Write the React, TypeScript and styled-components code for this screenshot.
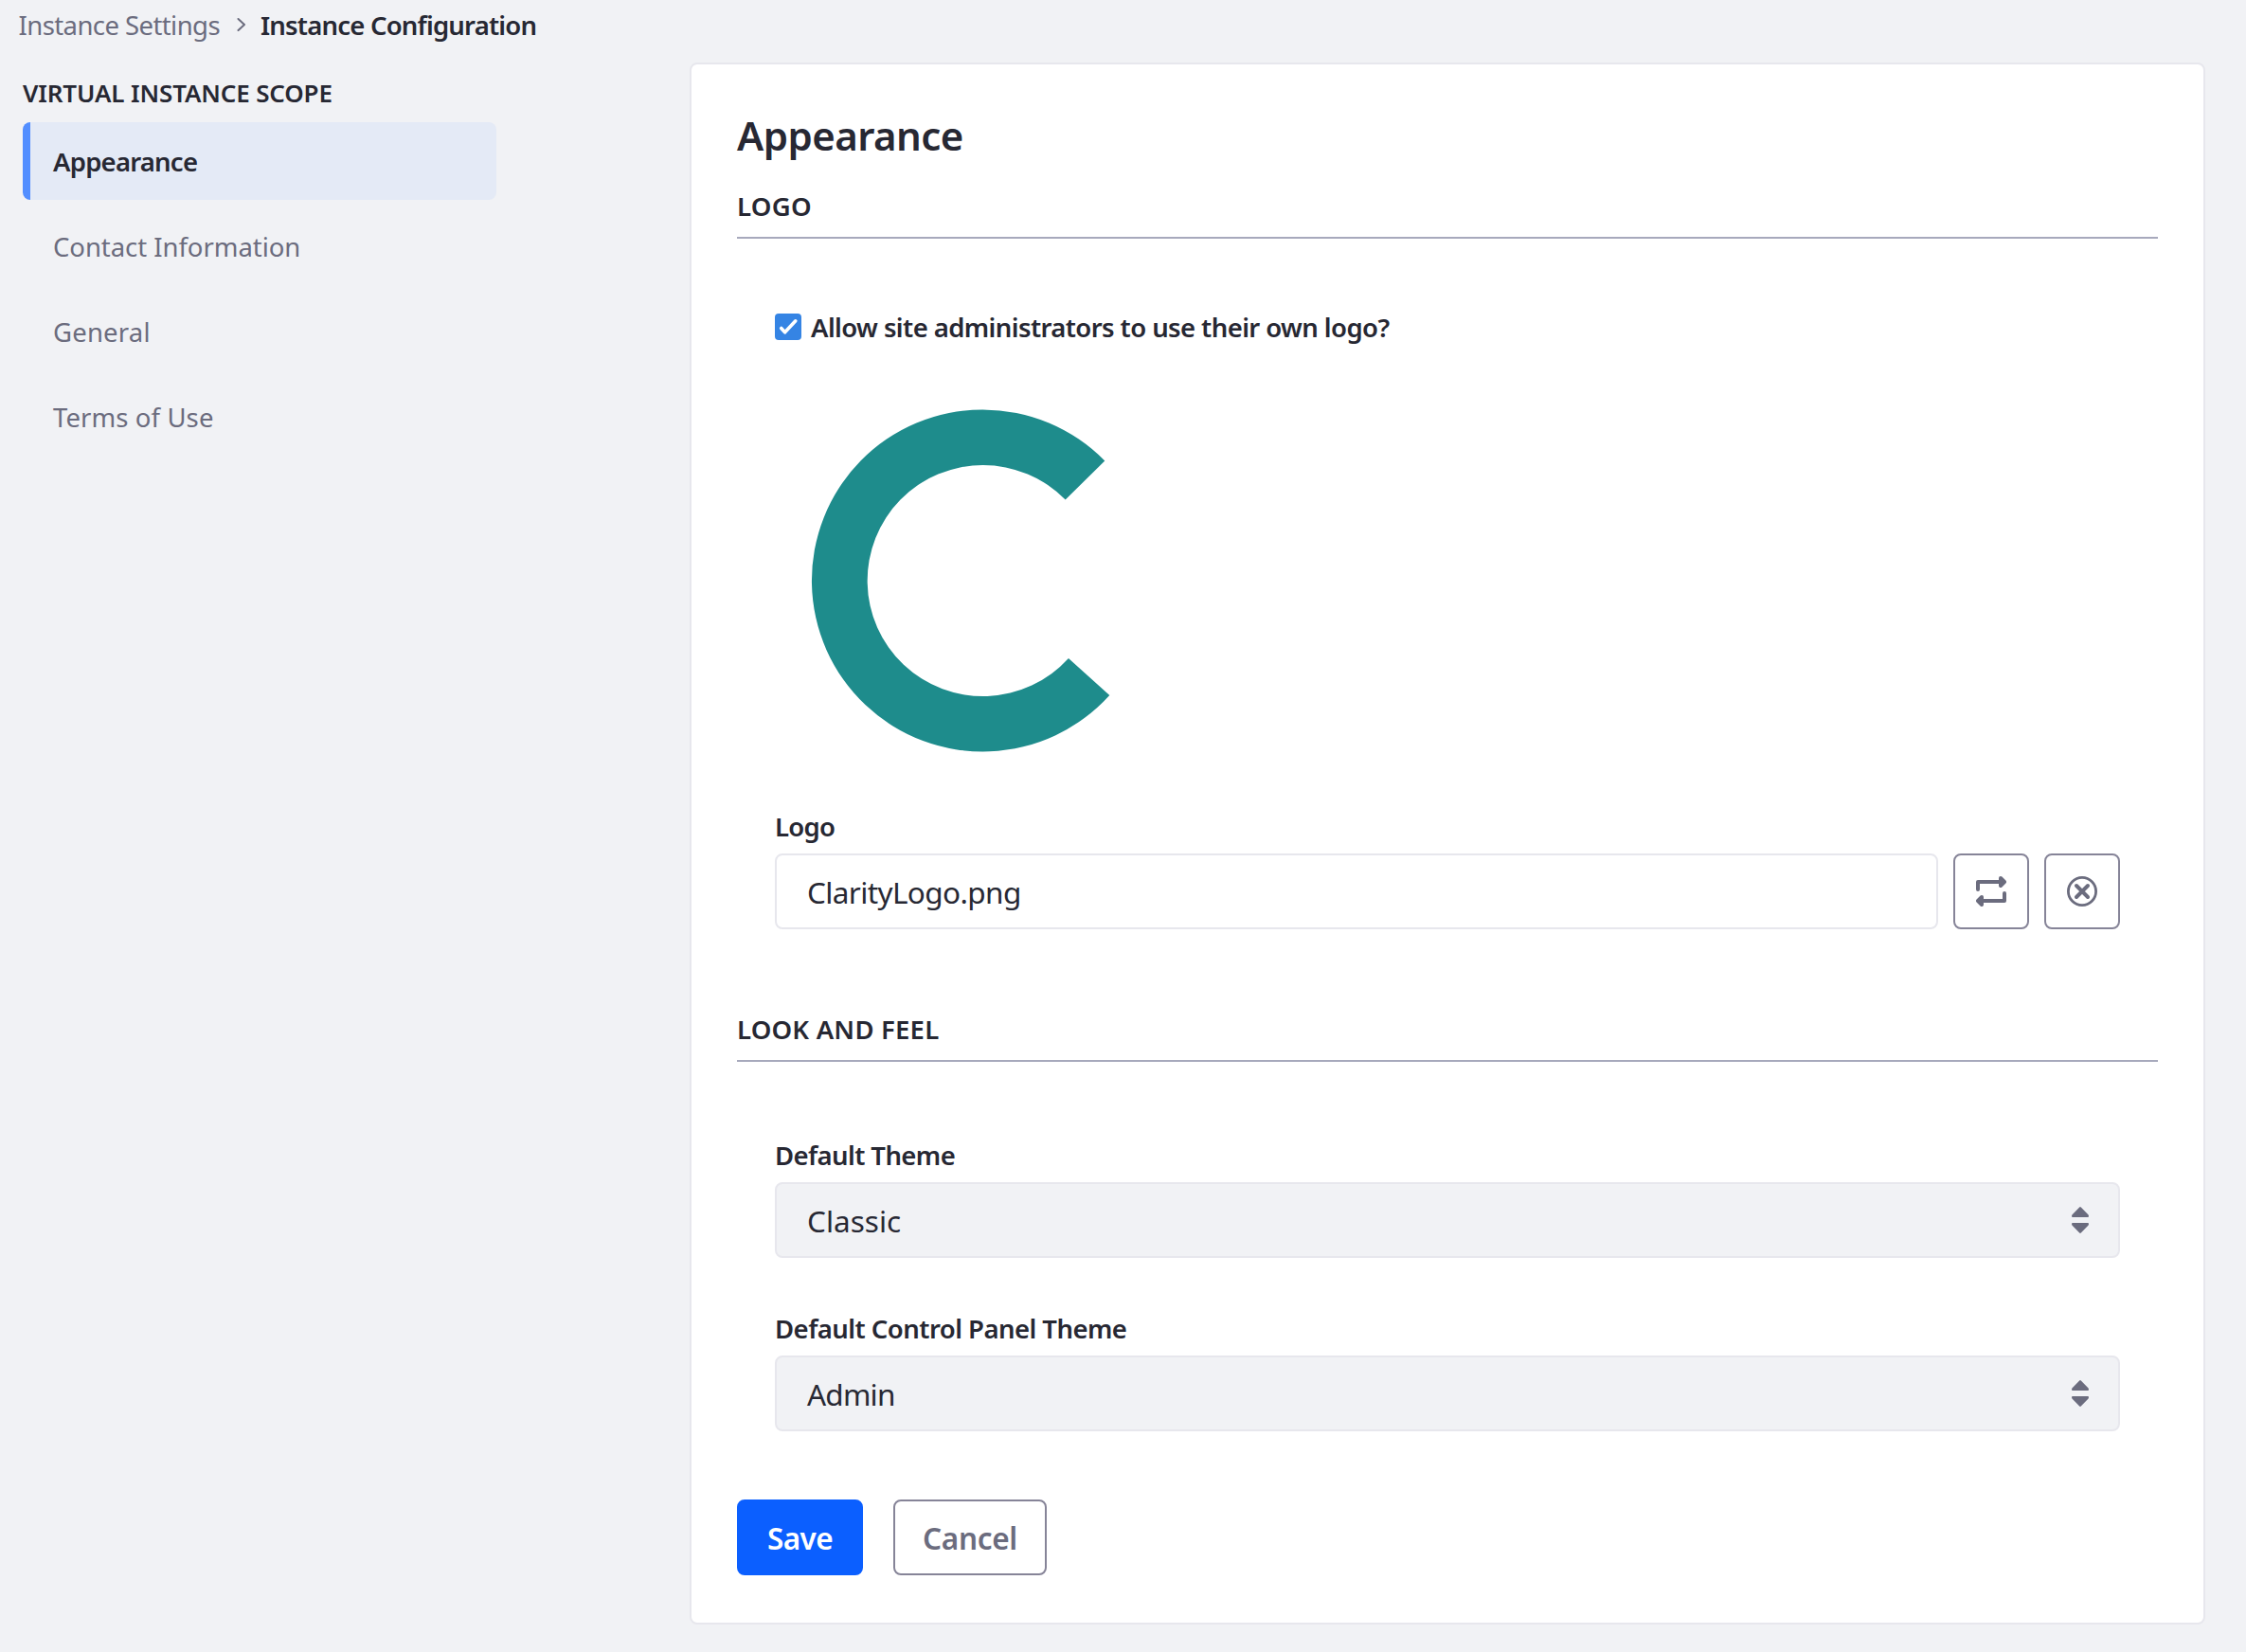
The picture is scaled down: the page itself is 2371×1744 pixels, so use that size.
import React, { useState } from "react";
import styled, { createGlobalStyle, css } from "styled-components";

const color = {
  page: "#f1f2f5",
  panel: "#ffffff",
  border: "#e7e7ed",
  dark: "#272833",
  muted: "#6b6c7e",
  line: "#a7a9bc",
  outline: "#868498",
  primary: "#0b5fff",
  accent: "#528eff",
  active: "#e4eaf6",
  check: "#3584e4",
  brand: "#1e8c8c",
};

const GlobalStyle = createGlobalStyle`
  *, *::before, *::after { box-sizing: border-box; }
  body {
    margin: 0;
    background: ${color.page};
    color: ${color.dark};
    font-family: "Noto Sans", "Open Sans", sans-serif;
    font-size: 27.5px;
  }
`;

const Text = styled.span<{ $track?: number }>`
  letter-spacing: ${(p) => p.$track ?? 0}px;
  white-space: nowrap;
`;

const ControlText = styled(Text)`
  padding-top: 2px;
`;

const Page = styled.div`
  min-height: 1744px;
  background: ${color.page};
`;

const Breadcrumb = styled.nav`
  display: flex;
  align-items: center;
  height: 52px;
  padding-left: 19.5px;
  margin-bottom: 14px;
  line-height: 52px;
`;

const Crumb = styled.a<{ $current?: boolean }>`
  padding-top: 1px;
  color: ${(p) => (p.$current ? color.dark : color.muted)};
  font-weight: ${(p) => (p.$current ? 600 : 400)};
`;

const Chevron = styled.svg`
  flex: none;
  width: 10px;
  height: 16px;
  margin: 0 14.500px 0 18.500px;
`;

const Columns = styled.div`
  display: grid;
  grid-template-columns: 500px 1600px;
  column-gap: 204px;
  align-items: start;
  padding-left: 24px;
`;

const ScopeTitle = styled.h2`
  margin: 0;
  height: 63px;
  font-size: 26px;
  font-weight: 600;
  line-height: 65px;
`;

const MenuList = styled.ul`
  display: flex;
  flex-direction: column;
  gap: 8px;
  margin: 0;
  padding: 0;
  list-style: none;
`;

const MenuItem = styled.li<{ $active?: boolean }>`
  height: 82px;
  padding-left: 24px;
  border-left: 8px solid transparent;
  border-radius: 8px;
  color: ${color.muted};
  line-height: 84px;
  ${(p) =>
    p.$active &&
    css`
      border-left-color: ${color.accent};
      background: ${color.active};
      color: ${color.dark};
      font-weight: 600;
    `}
`;

const Sheet = styled.main`
  padding: 48px;
  border: 2px solid ${color.border};
  border-radius: 8px;
  background: ${color.panel};
`;

const SheetTitle = styled.h1`
  margin: 0 0 31px;
  font-size: 42px;
  font-weight: 600;
  line-height: 53px;
`;

const SectionTitle = styled.h3`
  margin: 0;
  padding-bottom: 14px;
  border-bottom: 2px solid ${color.line};
  font-size: 27.5px;
  font-weight: 600;
  line-height: 36px;
`;

const Fields = styled.div<{ $top: number; $bottom: number }>`
  display: flex;
  flex-direction: column;
  padding: ${(p) => p.$top}px 40px ${(p) => p.$bottom}px;
`;

const CheckRow = styled.label`
  display: flex;
  align-items: center;
  gap: 10px;
  height: 40px;
  font-weight: 600;
  line-height: 38px;
`;

const CheckInput = styled.input`
  appearance: none;
  position: absolute;
  width: 0;
  height: 0;
  margin: 0;
`;

const CheckBox = styled.svg`
  flex: none;
  width: 28px;
  height: 28px;
  border-radius: 4px;
  background: ${color.check};
`;

const BrandMark = styled.svg`
  display: block;
  width: 318px;
  height: 362px;
  margin: 67px 0 60px 38px;
`;

const Field = styled.div`
  display: flex;
  flex-direction: column;
  gap: 9px;
  & + & {
    margin-top: 56px;
  }
`;

const Label = styled.label`
  font-weight: 600;
  line-height: 38px;
`;

const InputRow = styled.div`
  display: flex;
  gap: 16px;
`;

const control = css`
  display: flex;
  align-items: center;
  height: 80px;
  border: 2px solid ${color.border};
  border-radius: 8px;
  font-size: 31.5px;
  line-height: 74px;
`;

const FileInput = styled.div`
  ${control}
  flex: 1;
  padding: 0 32px;
`;

const Select = styled.div`
  ${control}
  justify-content: space-between;
  padding: 0 31px 0 32px;
  background: ${color.page};
`;

const Carets = styled.svg`
  width: 18px;
  height: 28px;
`;

const Button = styled.button<{ $primary?: boolean; $width: number }>`
  ${control}
  flex: none;
  justify-content: center;
  width: ${(p) => p.$width}px;
  padding: 0;
  border-color: ${(p) => (p.$primary ? color.primary : color.outline)};
  background: ${(p) => (p.$primary ? color.primary : color.panel)};
  color: ${(p) => (p.$primary ? "#fff" : color.muted)};
  font-family: inherit;
  font-weight: 600;
`;

const Icon = styled.svg`
  width: 32px;
  height: 32px;
  fill: none;
  stroke: ${color.muted};
  stroke-linecap: round;
  stroke-linejoin: round;
`;

const Actions = styled.div`
  display: flex;
  gap: 32px;
  padding-bottom: 2px;
`;

const menu = [
  { label: "Appearance", track: -0.78 },
  { label: "Contact Information", track: -0.05 },
  { label: "General", track: 0.2 },
  { label: "Terms of Use", track: 0.1 },
];

function SelectField({ label, labelTrack, value, track }: { label: string; labelTrack: number; value: string; track: number }) {
  return (
    <Field>
      <Label>
        <Text $track={labelTrack}>{label}</Text>
      </Label>
      <Select role="combobox">
        <ControlText $track={track}>{value}</ControlText>
        <Carets viewBox="0 0 18 28" fill={color.muted}>
          <path d="M8.2.5a1.1 1.1 0 0 1 1.6 0L17.6 8.4Q18.6 10.9 17 11H1Q-.6 10.9.4 8.4z" />
          <path d="M8.2 27.5a1.1 1.1 0 0 0 1.6 0L17.6 19.6Q18.6 17.1 17 17H1Q-.6 17.1.4 19.6z" />
        </Carets>
      </Select>
    </Field>
  );
}

export default function App() {
  const [allow, setAllow] = useState(true);
  return (
    <Page>
      <GlobalStyle />
      <Breadcrumb>
        <Crumb>
          <Text $track={-0.58}>Instance Settings</Text>
        </Crumb>
        <Chevron viewBox="0 0 10 16" fill="none" stroke={color.muted} strokeWidth="2" strokeLinecap="round" strokeLinejoin="round">
          <path d="M1.5 2 8 8l-6.500 6" />
        </Chevron>
        <Crumb $current>
          <Text $track={-0.8}>Instance Configuration</Text>
        </Crumb>
      </Breadcrumb>
      <Columns>
        <aside>
          <ScopeTitle>
            <Text $track={-0.14}>VIRTUAL INSTANCE SCOPE</Text>
          </ScopeTitle>
          <MenuList>
            {menu.map((m, i) => (
              <MenuItem key={m.label} $active={i === 0}>
                <Text $track={m.track}>{m.label}</Text>
              </MenuItem>
            ))}
          </MenuList>
        </aside>
        <Sheet>
          <SheetTitle>
            <Text $track={-0.55}>Appearance</Text>
          </SheetTitle>
          <SectionTitle>
            <Text $track={0.3}>LOGO</Text>
          </SectionTitle>
          <Fields $top={73} $bottom={88}>
            <CheckRow>
              <CheckInput type="checkbox" checked={allow} onChange={() => setAllow(!allow)} />
              <CheckBox viewBox="0 0 28 28" fill="none" stroke="#fff" strokeWidth="3.6" strokeLinecap="round" strokeLinejoin="round">
                {allow && <path d="M6.700 15.500 10.600 19.800 21.800 7.800" />}
              </CheckBox>
              <ControlText $track={-0.59}>Allow site administrators to use their own logo?</ControlText>
            </CheckRow>
            <BrandMark viewBox="0 0 318 362" fill={color.brand}>
              <path d="M310.300 54.500A180.500 180.500 0 1 0 315.300 302L272 263A122 122 0 1 1 268.700 95.500z" />
            </BrandMark>
            <Field>
              <Label>
                <Text $track={-0.7}>Logo</Text>
              </Label>
              <InputRow>
                <FileInput>
                  <ControlText $track={-0.62}>ClarityLogo.png</ControlText>
                </FileInput>
                <Button $width={80} aria-label="Change">
                  <Icon viewBox="0 0 32 32" strokeWidth="4">
                    <path d="M2 14V6H28M30 18V26H4" />
                    <path fill={color.muted} d="M26 2 30 6 26 10zM6 22 2 26 6 30z" />
                  </Icon>
                </Button>
                <Button $width={80} aria-label="Clear">
                  <Icon viewBox="0 0 32 32">
                    <circle cx="16" cy="16" r="14.600" strokeWidth="2.800" />
                    <path d="M10 10 22 22M22 10 10 22" strokeWidth="4" />
                  </Icon>
                </Button>
              </InputRow>
            </Field>
          </Fields>
          <SectionTitle>
            <Text $track={0.2}>LOOK AND FEEL</Text>
          </SectionTitle>
          <Fields $top={80} $bottom={72}>
            <SelectField label="Default Theme" labelTrack={-0.6} value="Classic" track={0} />
            <SelectField label="Default Control Panel Theme" labelTrack={-0.54} value="Admin" track={-0.8} />
          </Fields>
          <Actions>
            <Button $primary $width={133}>
              <ControlText $track={-0.6}>Save</ControlText>
            </Button>
            <Button $width={162}>
              <ControlText $track={-0.3}>Cancel</ControlText>
            </Button>
          </Actions>
        </Sheet>
      </Columns>
    </Page>
  );
}
